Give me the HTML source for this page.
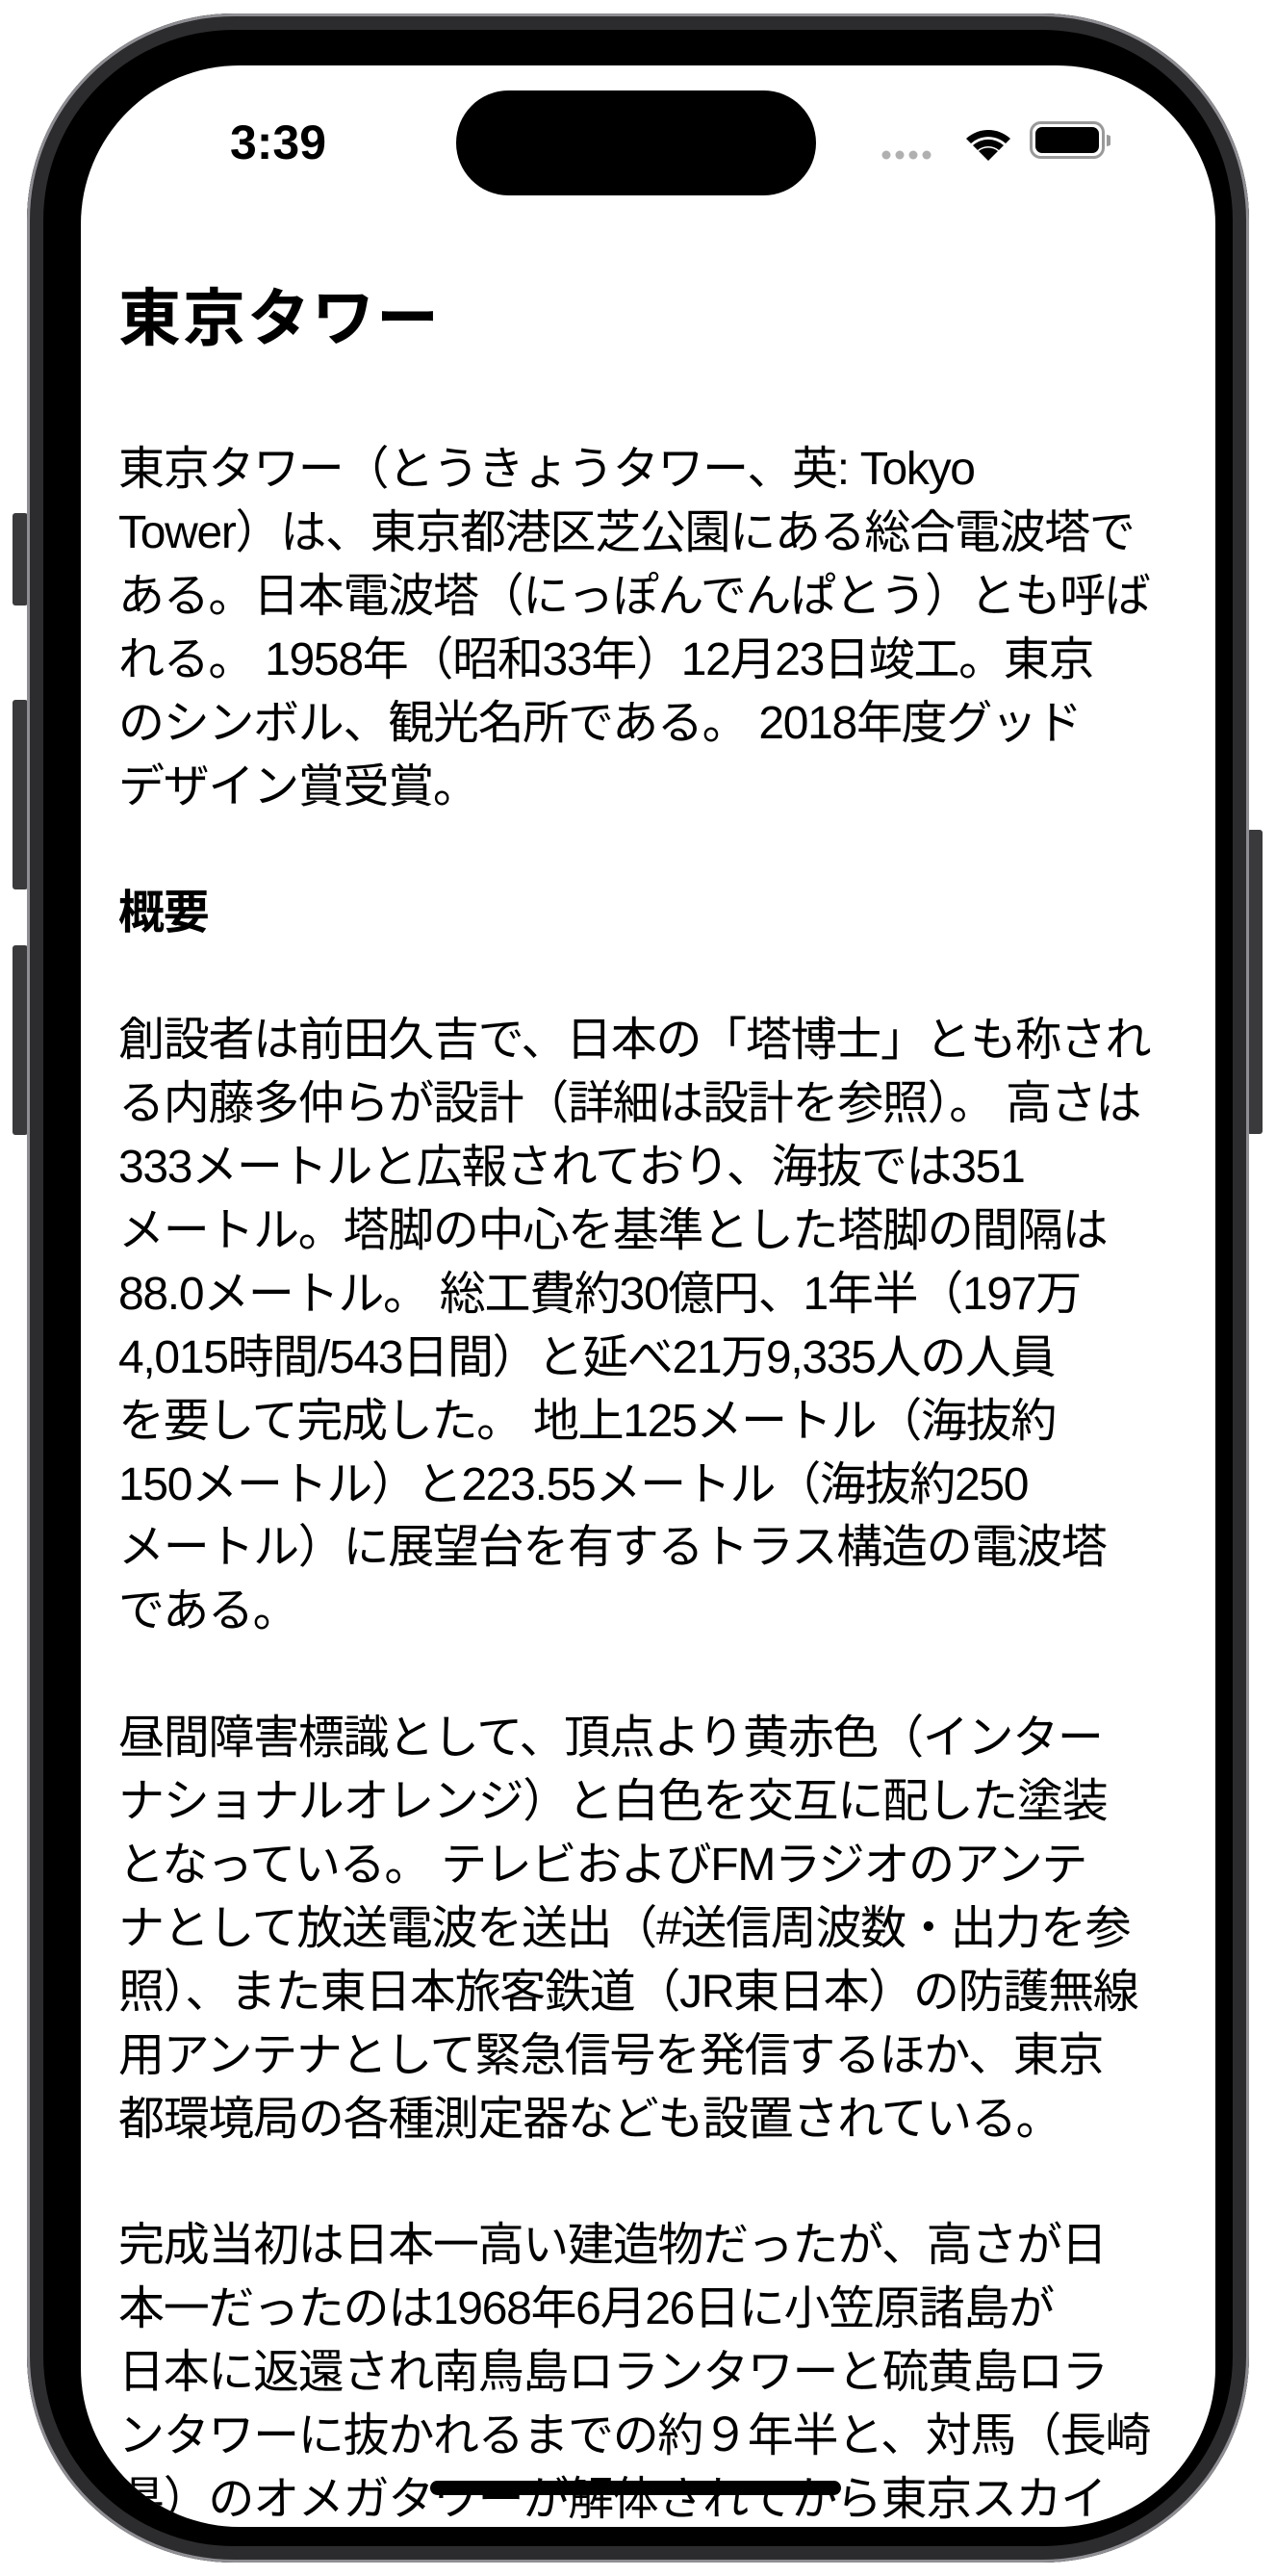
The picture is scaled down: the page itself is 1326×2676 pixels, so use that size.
<!DOCTYPE html>
<html><head><meta charset="utf-8">
<style>
html,body{margin:0;padding:0;background:#fff;}
body{width:1326px;height:2676px;position:relative;overflow:hidden;}
.btn{position:absolute;background:#3a3a3c;border-radius:3px;}
.frame{position:absolute;left:28px;top:14px;width:1270px;height:2648px;border-radius:215px;background:#000;box-shadow:inset 0 0 0 3px #8e8e93, inset 0 0 0 17px #2c2c2e;}
.screen{position:absolute;left:84px;top:68px;width:1179px;height:2557px;border-radius:165px;background:#fff;overflow:hidden;}
.island{position:absolute;left:390px;top:26px;width:374px;height:109px;border-radius:55px;background:#000;}
.time{position:absolute;left:135px;top:55px;width:140px;text-align:center;font:bold 50px "Liberation Sans",sans-serif;color:#000;line-height:1;}
.title{position:absolute;left:39px;top:230px;font:bold 65px "Liberation Sans","Noto Sans CJK JP",sans-serif;letter-spacing:2px;line-height:1;color:#000;white-space:nowrap;}
.body{position:absolute;left:39px;top:387px;font:48px "Liberation Sans","Noto Sans CJK JP",sans-serif;line-height:65.9px;color:#000;white-space:nowrap;letter-spacing:-1.3px;}
.body b{font-weight:bold;}
.home{position:absolute;left:363px;top:2509px;width:427px;height:15px;border-radius:8px;background:#000;}
</style></head><body>
<div class="btn" style="left:13px;top:533px;width:16px;height:96px"></div>
<div class="btn" style="left:13px;top:727px;width:16px;height:197px"></div>
<div class="btn" style="left:13px;top:982px;width:16px;height:197px"></div>
<div class="btn" style="left:1296px;top:862px;width:16px;height:316px"></div>
<div class="frame"></div>
<div class="screen">
<div class="island"></div>
<div class="time">3:39</div>
<svg style="position:absolute;left:830px;top:58px" width="240" height="42" viewBox="0 0 240 42">
<g fill="#b0b0b0"><circle cx="7" cy="35" r="4.5"/><circle cx="21" cy="35" r="4.5"/><circle cx="35" cy="35" r="4.5"/><circle cx="49" cy="35" r="4.5"/></g>
<path d="M113 41 L103 31 A16 16 0 0 1 123 31 Z" fill="#000"/>
<path d="M97 25 A24 24 0 0 1 129 25 L124 30 A17 17 0 0 0 102 30 Z" fill="#000"/>
<path d="M90 18 A34 34 0 0 1 136 18 L131 23 A27 27 0 0 0 95 23 Z" fill="#000"/>
<rect x="157.5" y="1.5" width="75" height="36" rx="10" fill="none" stroke="#999" stroke-width="3"/>
<rect x="162" y="6" width="66" height="27" rx="7" fill="#000"/>
<path d="M236 14 a5 5 0 0 1 0 12 Z" fill="#999"/>
</svg>
<div class="title">東京タワー</div>
<div class="body">東京タワー（とうきょうタワー、英: Tokyo<br>Tower）は、東京都港区芝公園にある総合電波塔で<br>ある。日本電波塔（にっぽんでんぱとう）とも呼ば<br>れる。 1958年（昭和33年）12月23日竣工。東京<br>のシンボル、観光名所である。 2018年度グッド<br>デザイン賞受賞。<br>&nbsp;<br><b>概要</b><br>&nbsp;<br>創設者は前田久吉で、日本の「塔博士」とも称され<br>る内藤多仲らが設計（詳細は設計を参照）。 高さは<br>333メートルと広報されており、海抜では351<br>メートル。塔脚の中心を基準とした塔脚の間隔は<br>88.0メートル。 総工費約30億円、1年半（197万<br>4,015時間/543日間）と延べ21万9,335人の人員<br>を要して完成した。 地上125メートル（海抜約<br>150メートル）と223.55メートル（海抜約250<br>メートル）に展望台を有するトラス構造の電波塔<br>である。<br>&nbsp;<br>昼間障害標識として、頂点より黄赤色（インター<br>ナショナルオレンジ）と白色を交互に配した塗装<br>となっている。 テレビおよびFMラジオのアンテ<br>ナとして放送電波を送出（#送信周波数・出力を参<br>照）、また東日本旅客鉄道（JR東日本）の防護無線<br>用アンテナとして緊急信号を発信するほか、東京<br>都環境局の各種測定器なども設置されている。<br>&nbsp;<br>完成当初は日本一高い建造物だったが、高さが日<br>本一だったのは1968年6月26日に小笠原諸島が<br>日本に返還され南鳥島ロランタワーと硫黄島ロラ<br>ンタワーに抜かれるまでの約９年半と、対馬（長崎<br>県）のオメガタワーが解体されてから東京スカイ</div>
<div class="home"></div>
</div>
</body></html>
